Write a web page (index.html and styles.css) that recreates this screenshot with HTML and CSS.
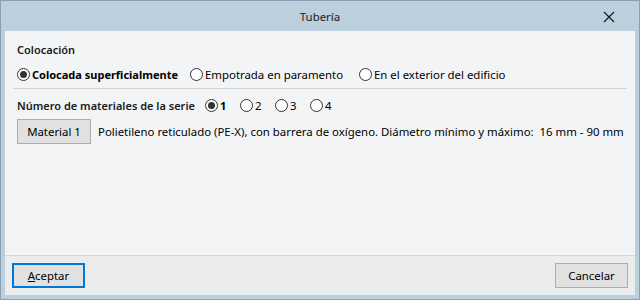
FILE: index.html
```html
<!DOCTYPE html>
<html lang="es">
<head>
  <meta charset="UTF-8">
  <title>Tubería</title>
  <link rel="stylesheet" href="styles.css">
</head>
<body>
  <div class="window">
    <div class="titlebar">
      <span class="title">Tubería</span>
      <span class="close">
        <svg width="12" height="12" viewBox="0 0 12 12"><path d="M1 1 L11 11 M11 1 L1 11" stroke="#1a1a1a" stroke-width="1.2"/></svg>
      </span>
    </div>
    <div class="client">
      <div class="content">
        <div class="group-label">Colocación</div>
        <div class="radio-row placement">
          <label class="radio checked bold"><span class="dot"></span>Colocada superficialmente</label>
          <label class="radio"><span class="dot"></span>Empotrada en paramento</label>
          <label class="radio"><span class="dot"></span>En el exterior del edificio</label>
        </div>
        <div class="separator"></div>
        <div class="radio-row series">
          <span class="series-label">Número de materiales de la serie</span>
          <label class="radio checked bold"><span class="dot"></span>1</label>
          <label class="radio"><span class="dot"></span>2</label>
          <label class="radio"><span class="dot"></span>3</label>
          <label class="radio"><span class="dot"></span>4</label>
        </div>
        <div class="material-row">
          <button class="btn">Material 1</button>
          <span class="desc">Polietileno reticulado (PE-X), con barrera de oxígeno. Diámetro mínimo y máximo:&nbsp; 16 mm - 90 mm</span>
        </div>
      </div>
      <div class="footer">
        <button class="btn default"><u>A</u>ceptar</button>
        <button class="btn">Cancelar</button>
      </div>
    </div>
  </div>
</body>
</html>
```

FILE: styles.css
```css
body {
  margin: 0;
  font-family: "Noto Sans", sans-serif;
  font-size: 11.4px;
  color: #000;
}
.window {
  width: 640px;
  height: 300px;
  box-sizing: border-box;
  background-color: #bccfdc;
  border: 1px solid #8aa0b2;
  padding: 0 4px 4px 4px;
  display: flex;
  flex-direction: column;
}
.titlebar {
  height: 30px;
  display: flex;
  align-items: center;
  justify-content: center;
  position: relative;
}
.title {
  color: #1a1a1a;
}
.close {
  position: absolute;
  right: 20px;
  top: 10px;
  height: 12px;
}
.client {
  flex: 1;
  display: flex;
  flex-direction: column;
  background-color: #f3f4f6;
}
.content {
  flex: 1;
  padding: 10px 8px 0 8px;
  white-space: nowrap;
}
.bold {
  font-weight: bold;
  font-size: 11px;
}
.group-label,
.series-label {
  font-weight: 600;
  font-size: 11px;
  color: #1a1a1a;
}
.group-label {
  height: 18px;
  line-height: 18px;
  padding-left: 4px;
}
.radio-row {
  display: flex;
  align-items: center;
  height: 22px;
  margin-top: 4px;
  padding-left: 4px;
}
.radio {
  display: flex;
  align-items: center;
}
.placement .radio:nth-child(1) {
  width: 173px;
}
.placement .radio:nth-child(2) {
  width: 169px;
}
.dot {
  width: 11px;
  height: 11px;
  border: 1px solid #333;
  border-radius: 50%;
  background-color: #fff;
  margin-right: 2px;
  position: relative;
}
.checked .dot::after {
  content: "";
  position: absolute;
  left: 2px;
  top: 2px;
  width: 7px;
  height: 7px;
  border-radius: 50%;
  background-color: #333;
}
.separator {
  height: 1px;
  background-color: #d4d4d4;
  margin: 3px 0 0 0;
}
.series {
  margin-top: 5px;
}
.series .series-label {
  width: 188px;
}
.series .radio {
  width: 35px;
}
.material-row {
  display: flex;
  align-items: center;
  margin-top: 3px;
  padding-left: 4px;
}
.btn {
  font-family: inherit;
  font-size: 11.4px;
  background-color: #e1e1e1;
  border: 1px solid #adadad;
  height: 25px;
  padding: 0 4px;
  color: #000;
}
.material-row .btn {
  width: 74px;
  margin-right: 7px;
}
.footer {
  height: 40px;
  box-sizing: border-box;
  border-top: 1px solid #d4d6d8;
  background-color: #ebecee;
  display: flex;
  align-items: center;
  justify-content: space-between;
  padding: 0 7px;
}
.footer .btn {
  width: 73px;
}
.footer .btn.default {
  border: 2px solid #0078d7;
}
```
